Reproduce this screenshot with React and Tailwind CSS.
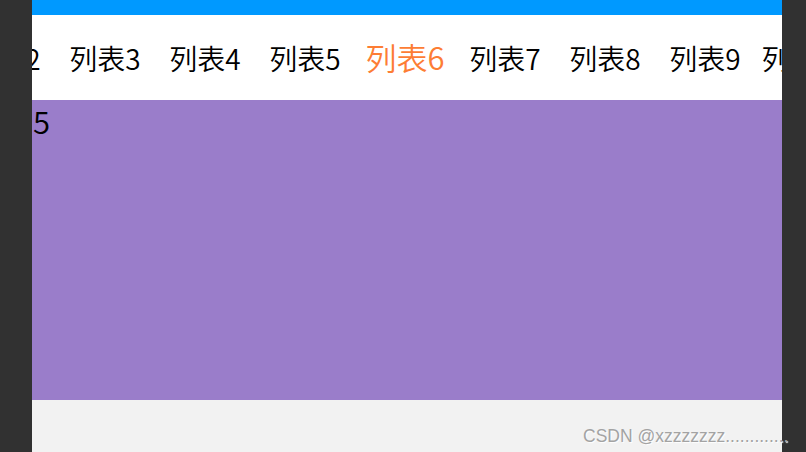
import React from "react";

const tabs = Array.from({ length: 12 }, (_, i) => i + 1);

const App = () => {
  const active = 6;
  return (
    <div
      className="relative flex h-[452px] w-[806px] overflow-hidden bg-[#313131]"
      style={{ fontFamily: '"Noto Sans CJK SC", "Noto Sans", sans-serif' }}
    >
      <div className="ml-[32px] flex w-[750px] flex-col">
        {/* top bar */}
        <div className="h-[15px] bg-[#0099ff]" />
        {/* tab strip, scrolled */}
        <div className="h-[85px] overflow-hidden bg-white">
          <div className="-ml-[177px] flex h-full items-center">
            {tabs.map((n) => (
              <div
                key={n}
                className={
                  n === active
                    ? "flex w-[100px] shrink-0 justify-center text-[31px] font-[350] text-[#fd7d34]"
                    : "flex w-[100px] shrink-0 justify-center text-[28px] font-[350] text-black"
                }
              >
                列表{n}
              </div>
            ))}
          </div>
        </div>
        {/* content */}
        <div className="h-[300px] bg-[#9a7dca]">
          <p className="pl-[1px] pt-[1px] text-[31px] font-[350] leading-[40px] text-black">5</p>
        </div>
        <div className="flex-1 bg-[#f2f2f2]" />
      </div>
      <div className="w-[24px] bg-[#313131]" />
      {/* watermark */}
      <div
        className="absolute left-[583px] top-[423px] whitespace-nowrap text-[17.5px] text-[#a3a3a3]"
        style={{ fontFamily: '"Liberation Sans", Arial, sans-serif', textShadow: "1px 1px 1px #fff" }}
      >
        CSDN @xzzzzzzz.............
      </div>
    </div>
  );
};

export default App;
